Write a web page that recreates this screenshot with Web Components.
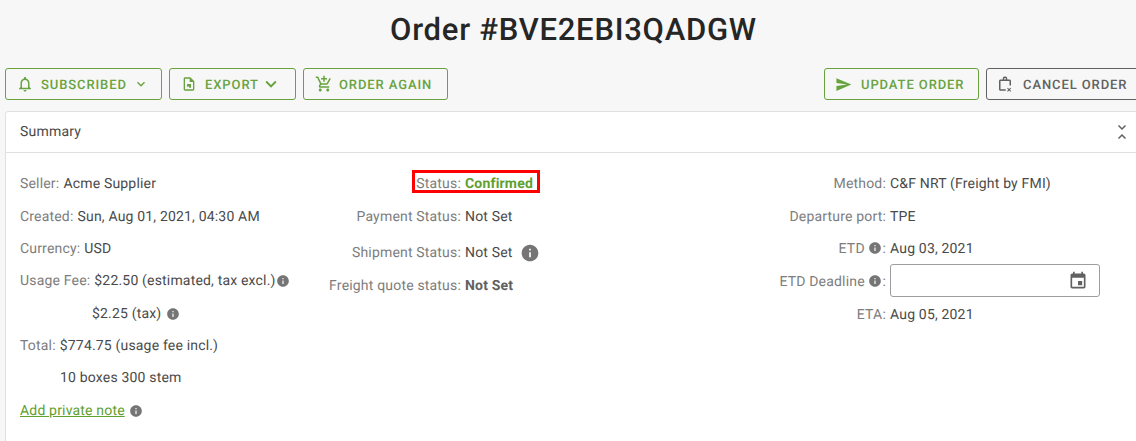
<!DOCTYPE html>
<html><head><meta charset="utf-8"><style>
html,body{margin:0;padding:0;height:441px;overflow:hidden;background:#f7f7f7}
body{font-family:Roboto,sans-serif;width:1136px;text-rendering:geometricPrecision}
</style></head><body>
<order-page></order-page>
<script>
const P={
bell:'M12 22c1.1 0 2-.9 2-2h-4c0 1.1.9 2 2 2zm6-6v-5c0-3.07-1.63-5.64-4.5-6.32V4c0-.83-.67-1.5-1.5-1.5s-1.5.67-1.5 1.5v.68C7.64 5.36 6 7.92 6 11v5l-2 2v1h16v-1l-2-2zm-2 1H8v-6c0-2.48 1.51-4.5 4-4.5s4 2.02 4 4.5v6z',
down:'M7.41 8.59L12 13.17l4.59-4.58L18 10l-6 6-6-6 1.41-1.41z',
file:'M14 2H6c-1.1 0-2 .9-2 2v16c0 1.1.9 2 2 2h12c1.1 0 2-.9 2-2V8l-6-6zm4 18H6V4h7v5h5v11zM9 12h6v5.500h-2.500L11 15l-1 1.500-1.500-1 1-1.500L9 14z',
cart:'M11 9h2V6h3V4h-3V1h-2v3H8v2h3v3zm-4 9c-1.1 0-1.99.9-1.99 2S5.9 22 7 22s2-.9 2-2-.9-2-2-2zm10 0c-1.1 0-1.99.9-1.99 2s.89 2 1.99 2 2-.9 2-2-.9-2-2-2zm-9.83-3.25l.03-.12.9-1.63h7.45c.75 0 1.41-.41 1.75-1.03l3.86-7.01L19.42 4h-.01l-1.1 2-2.76 5H8.53l-.13-.27L6.16 6l-.95-2-.94-2H1v2h2l3.6 7.59-1.35 2.45c-.16.28-.25.61-.25.96 0 1.1.9 2 2 2h12v-2H7.42c-.13 0-.25-.11-.25-.25z',
send:'M2.01 21L23 12 2.01 3 2 10l15 2-15 2z',
bag:'M9 6V4.500C9 3.100 10.100 2 11.500 2h1C13.900 2 15 3.100 15 4.500V6h3c1.100 0 2 .9 2 2v6h-2V8H6v11h7v2H6c-1.100 0-2-.9-2-2V8c0-1.100.9-2 2-2h3zm2 0h2V4.500c0-.3-.2-.5-.5-.5h-1c-.3 0-.5.2-.5.500V6zm4.800 11l1.700 1.700 1.700-1.700 1 1-1.700 1.700 1.700 1.700-1 1-1.700-1.700-1.700 1.700-1-1 1.700-1.700-1.700-1.700z',
info:'M12 2C6.48 2 2 6.48 2 12s4.48 10 10 10 10-4.48 10-10S17.52 2 12 2zm1 15h-2v-6h2v6zm0-8h-2V7h2v2z',
event:'M17 12h-5v5h5v-5zM16 1v2H8V1H6v2H5c-1.110 0-1.990.9-1.990 2L3 19c0 1.100.89 2 2 2h14c1.100 0 2-.9 2-2V5c0-1.100-.9-2-2-2h-1V1h-2zm3 18H5V8h14v11z'
};
class BaseEl extends HTMLElement{
  render(css,html){const r=this.shadowRoot||this.attachShadow({mode:'open'});r.innerHTML='<style>'+css+'</style>'+html;}
}
class UiIcon extends BaseEl{connectedCallback(){
  const s=this.getAttribute('size')||14,n=this.getAttribute('name');
  this.render(`:host{display:inline-flex;flex:none;width:${s}px;height:${s}px;vertical-align:middle}svg{display:block;width:100%;height:100%;fill:currentColor}`,
  `<svg viewBox="0 0 24 24"><path d="${P[n]}"/></svg>`);
}}
class InfoIcon extends BaseEl{connectedCallback(){
  const s=this.getAttribute('size')||14;
  this.render(`:host{display:inline-flex;color:#757575;margin-left:${this.getAttribute('gap')||0}px;vertical-align:middle;position:relative;top:${this.getAttribute('dy')||0}px}`,
  `<ui-icon name="info" size="${s}"></ui-icon>`);
}}
class UiButton extends BaseEl{connectedCallback(){
  const c=this.getAttribute('color')||'#68a33f';
  const ic=this.getAttribute('icon'),is=this.getAttribute('isize')||18,cs=this.getAttribute('csize'),chev=this.hasAttribute('chev');
  const w=this.getAttribute('w');
  this.render(`:host{display:inline-flex;box-sizing:border-box;height:32px;width:${w}px;align-items:center;border:1px solid ${c};border-radius:3px;color:${c};font:500 13px/1 Roboto,sans-serif;letter-spacing:.9px;padding-left:${this.getAttribute('pl')||10}px;background:transparent;white-space:nowrap;flex:none}
  .t{margin-left:${this.getAttribute('tg')||10}px;padding-top:2px}.c{margin-left:${this.getAttribute('cg')||0}px;display:inline-flex}`,
  `<ui-icon name="${ic}" size="${is}"></ui-icon><span class="t"><slot></slot></span>${chev?`<span class="c"><ui-icon name="down" size="${cs}"></ui-icon></span>`:''}`);
}}
class OrderToolbar extends BaseEl{connectedCallback(){
  this.render(`:host{display:flex;justify-content:space-between;height:32px}.g{display:flex;gap:7px}`,
  `<div class="g"><slot name="l"></slot></div><div class="g"><slot name="r"></slot></div>`);
}}
class SummaryCard extends BaseEl{connectedCallback(){
  this.render(`:host{display:block;background:#fff;border:1px solid #e0e0e0;border-radius:3px 3px 0 0;height:340px;box-sizing:border-box;overflow:hidden}
  header{height:41px;box-sizing:border-box;border-bottom:1px solid #e0e0e0;display:flex;align-items:center;justify-content:space-between;padding:0 13px 0 14px;font:400 14px/1 Roboto,sans-serif;letter-spacing:.2px;color:#4a4a4a}
  .b{display:flex;color:#4a4a4a}
  svg{display:block;width:12px;height:18px;fill:none;stroke:#616161;stroke-width:1.500;position:relative;top:1px}`,
  `<header><span>Summary</span><svg viewBox="0 0 12 18"><path d="M2.500 1.500L6 5l3.500-3.500M2.500 14.500L6 11l3.500 3.500"/></svg></header><div class="b"><slot></slot></div>`);
}}
class InfoRow extends BaseEl{connectedCallback(){
  const la=this.getAttribute('lw');
  this.render(`:host{display:flex;align-items:center;height:${this.getAttribute('h')||32.350}px;font:400 14px/20px Roboto,sans-serif;letter-spacing:.18px;color:#4a4a4a;white-space:nowrap}
  .l{color:#7d7d7d;${la?`width:${la}px;flex:none;text-align:right;display:flex;justify-content:flex-end;align-items:center;`:''}}
  .v{margin-left:4px;display:flex;align-items:center}`,
  `<span class="l"><slot name="label"></slot></span><span class="v"><slot></slot></span>`);
}}
class InfoCol extends BaseEl{connectedCallback(){
  this.render(`:host{display:block;position:relative;flex:none;width:${this.getAttribute('w')}px;padding-top:${this.getAttribute('pt')||14}px;box-sizing:border-box}`,`<slot></slot>`);
}}
class HighlightBox extends BaseEl{connectedCallback(){
  this.render(`:host{position:absolute;left:99px;top:17px;width:128px;height:23px;box-sizing:border-box;border:3px solid #f00;pointer-events:none}`,``);
}}
class DateField extends BaseEl{connectedCallback(){
  this.render(`:host{display:flex;box-sizing:border-box;width:210px;height:33px;margin-bottom:2px;border:1px solid #9e9e9e;border-radius:3px;align-items:center;justify-content:flex-end;padding-right:11px;color:#616161;background:#fff}`,
  `<ui-icon name="event" size="20"></ui-icon>`);
}}
class OrderPage extends BaseEl{connectedCallback(){
  this.render(`:host{display:block;width:1147px;padding:0 5px;box-sizing:border-box;color:#424242}
  h1{margin:0;height:68px;box-sizing:border-box;padding-top:10px;text-align:center;font:500 31px/40px Roboto,sans-serif;letter-spacing:.75px;color:#262626}
  summary-card{margin-top:11px}
  .link{color:#5fa02f;text-decoration:underline}
  .st{color:#5fa02f;font-weight:700}
  .bold{font-weight:700;color:#616161}
  `,`
  <h1>Order #BVE2EBI3QADGW</h1>
  <order-toolbar>
    <ui-button slot="l" w="157" icon="bell" isize="18" chev csize="16" cg="6" pl="10" tg="7">SUBSCRIBED</ui-button>
    <ui-button slot="l" w="127" icon="file" isize="16" chev csize="22" cg="1" pl="11" tg="8">EXPORT</ui-button>
    <ui-button slot="l" w="145" icon="cart" isize="18" pl="11" tg="6">ORDER AGAIN</ui-button>
    <ui-button slot="r" w="155" icon="send" isize="17" pl="10" tg="9">UPDATE ORDER</ui-button>
    <ui-button slot="r" w="156" icon="bag" isize="18" pl="9" tg="9" color="#616161">CANCEL ORDER</ui-button>
  </order-toolbar>
  <summary-card>
    <info-col w="307" pt="15" style="padding-left:14px">
      <info-row><span slot="label">Seller:</span>Acme Supplier</info-row>
      <info-row><span slot="label">Created:</span>Sun, Aug 01, 2021, 04:30 AM</info-row>
      <info-row><span slot="label">Currency:</span>USD</info-row>
      <info-row><span slot="label">Usage Fee:</span>$22.50 (estimated, tax excl.)<info-icon size="14" gap="0"></info-icon></info-row>
      <info-row><span slot="label" style="display:inline-block;width:68px"></span>$2.25 (tax)<info-icon size="14" gap="5"></info-icon></info-row>
      <info-row><span slot="label">Total:</span>$774.75 (usage fee incl.)</info-row>
      <info-row><span slot="label" style="display:inline-block;width:36px"></span>10 boxes 300 stem</info-row>
      <info-row><a class="link" slot="label">Add private note</a><info-icon size="14" gap="0"></info-icon></info-row>
    </info-col>
    <info-col w="426" pt="15">
      <info-row lw="148" h="32.400"><span slot="label">Status:</span><span class="st">Confirmed</span></info-row>
      <info-row lw="148" h="33.600"><span slot="label">Payment Status:</span>Not Set</info-row>
      <info-row lw="148" h="38.400"><span slot="label">Shipment Status:</span>Not Set<info-icon size="20" gap="7"></info-icon></info-row>
      <info-row lw="148" h="27.600"><span slot="label">Freight quote status:</span><span class="bold">Not Set</span></info-row>
      <highlight-box></highlight-box>
    </info-col>
    <info-col w="400" pt="15">
      <info-row lw="147"><span slot="label">Method:</span>C&amp;F NRT (Freight by FMI)</info-row>
      <info-row lw="147"><span slot="label">Departure port:</span>TPE</info-row>
      <info-row lw="147"><span slot="label">ETD <info-icon size="14" gap="0" dy="-1"></info-icon>:</span>Aug 03, 2021</info-row>
      <info-row lw="147" h="33"><span slot="label">ETD Deadline <info-icon size="14" gap="0" dy="-1"></info-icon>:</span><date-field></date-field></info-row>
      <info-row lw="147" h="33"><span slot="label">ETA:</span>Aug 05, 2021</info-row>
    </info-col>
  </summary-card>`);
}}
[['ui-icon',UiIcon],['info-icon',InfoIcon],['ui-button',UiButton],['order-toolbar',OrderToolbar],['summary-card',SummaryCard],['info-row',InfoRow],['info-col',InfoCol],['highlight-box',HighlightBox],['date-field',DateField],['order-page',OrderPage]].forEach(([n,c])=>customElements.define(n,c));
</script>
</body></html>
